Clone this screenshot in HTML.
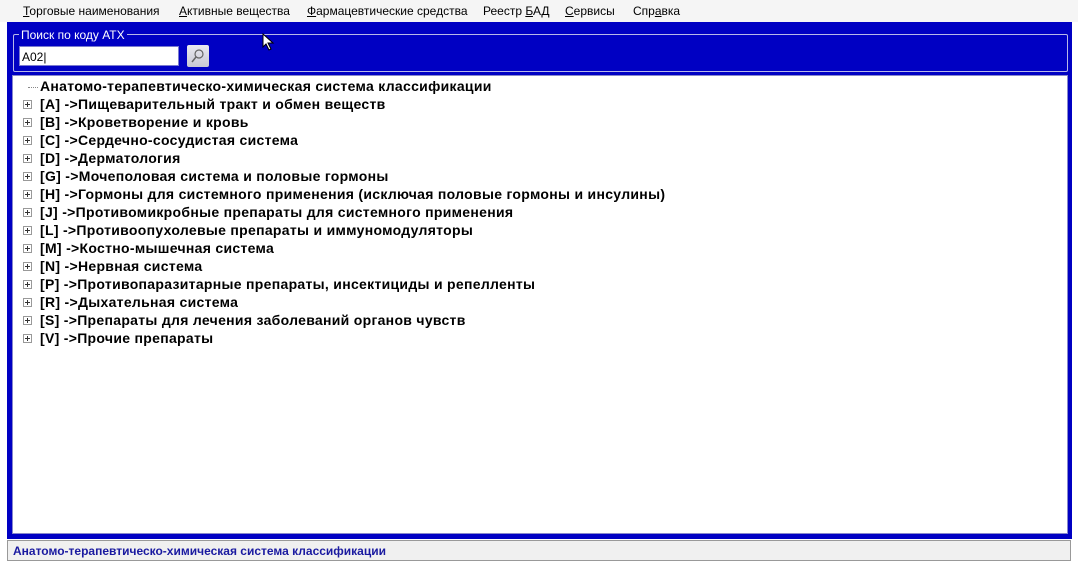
<!DOCTYPE html>
<html><head><meta charset="utf-8"><style>
body{margin:0;width:1078px;height:568px;background:#fff;position:relative;overflow:hidden;font-family:"Liberation Sans","DejaVu Sans",sans-serif}
.menu{position:absolute;top:0;left:0;height:22px;width:1078px;background:#f5f5f5;font-size:12px;color:#000}
.menu span{position:absolute;top:4px}
.blue{position:absolute;left:7px;top:22px;width:1065px;height:517px;background:#0000c3}
.grp{position:absolute;left:13px;top:34px;width:1053px;height:36px;border:1px solid #b8b8e8;border-radius:2px}
.glabel{position:absolute;left:19px;top:28px;background:#0000c3;color:#fff;font-size:12px;padding:0 2px}
.inp{position:absolute;left:19px;top:46px;width:160px;height:20px;background:#fff;border:1px solid #7a7ad0;box-sizing:border-box;font-size:12px;padding:3px 2px}
.btn{position:absolute;left:187px;top:45px;width:22px;height:22px;background:linear-gradient(#eaeaf0,#c8c8d4);border-radius:2px}
.tree{position:absolute;left:12px;top:75px;width:1056px;height:459px;background:#fff;border:1px solid #8888cc;box-sizing:border-box}
.row{position:absolute;left:40px;font-size:14px;letter-spacing:0.3px;font-weight:bold;color:#000;white-space:nowrap}
.pl{position:absolute;left:23px;width:7px;height:7px;border:1px solid #999;background:#fff}
.pl:before{content:"";position:absolute;left:1px;top:3px;width:5px;height:1px;background:#333}
.pl:after{content:"";position:absolute;left:3px;top:1px;width:1px;height:5px;background:#333}
.status{position:absolute;left:7px;top:540px;width:1064px;height:21px;border:1px solid #999;background:#f0f0f0;box-sizing:border-box}
.status span{position:absolute;left:5px;top:3px;font-size:12px;font-weight:bold;color:#1a1aa0}
</style></head><body>
<div class="menu">
<span style="left:23px"><u>Т</u>орговые наименования</span>
<span style="left:179px"><u>А</u>ктивные вещества</span>
<span style="left:307px"><u>Ф</u>армацевтические средства</span>
<span style="left:483px">Реестр <u>Б</u>АД</span>
<span style="left:565px"><u>С</u>ервисы</span>
<span style="left:633px">Спр<u>а</u>вка</span>
</div>
<div class="blue"></div>
<div class="grp"></div>
<div class="glabel">Поиск по коду АТХ</div>
<div class="inp">A02|</div>
<div class="btn"><svg width="22" height="22"><circle cx="12" cy="9" r="4" fill="none" stroke="#666" stroke-width="1.2"/><line x1="9" y1="12" x2="5" y2="17" stroke="#666" stroke-width="1.5"/></svg></div>
<div class="tree"></div>
<div style="position:absolute;left:28px;top:87px;width:10px;border-top:1px dotted #888"></div>
<div class="row" style="top:78px">Анатомо-терапевтическо-химическая система классификации</div>
<div class="pl" style="top:100px"></div><div class="row" style="top:96px">[A] -&gt;Пищеварительный тракт и обмен веществ</div>
<div class="pl" style="top:118px"></div><div class="row" style="top:114px">[B] -&gt;Кроветворение и кровь</div>
<div class="pl" style="top:136px"></div><div class="row" style="top:132px">[C] -&gt;Сердечно-сосудистая система</div>
<div class="pl" style="top:154px"></div><div class="row" style="top:150px">[D] -&gt;Дерматология</div>
<div class="pl" style="top:172px"></div><div class="row" style="top:168px">[G] -&gt;Мочеполовая система и половые гормоны</div>
<div class="pl" style="top:190px"></div><div class="row" style="top:186px">[H] -&gt;Гормоны для системного применения (исключая половые гормоны и инсулины)</div>
<div class="pl" style="top:208px"></div><div class="row" style="top:204px">[J] -&gt;Противомикробные препараты для системного применения</div>
<div class="pl" style="top:226px"></div><div class="row" style="top:222px">[L] -&gt;Противоопухолевые препараты и иммуномодуляторы</div>
<div class="pl" style="top:244px"></div><div class="row" style="top:240px">[M] -&gt;Костно-мышечная система</div>
<div class="pl" style="top:262px"></div><div class="row" style="top:258px">[N] -&gt;Нервная система</div>
<div class="pl" style="top:280px"></div><div class="row" style="top:276px">[P] -&gt;Противопаразитарные препараты, инсектициды и репелленты</div>
<div class="pl" style="top:298px"></div><div class="row" style="top:294px">[R] -&gt;Дыхательная система</div>
<div class="pl" style="top:316px"></div><div class="row" style="top:312px">[S] -&gt;Препараты для лечения заболеваний органов чувств</div>
<div class="pl" style="top:334px"></div><div class="row" style="top:330px">[V] -&gt;Прочие препараты</div>
<div class="status"><span>Анатомо-терапевтическо-химическая система классификации</span></div>
<svg style="position:absolute;left:262px;top:33px" width="14" height="18"><path d="M1 1 L1 14 L4 11 L7 17 L9 16 L6 10 L11 10 Z" fill="#fff" stroke="#000"/></svg>
</body></html>
